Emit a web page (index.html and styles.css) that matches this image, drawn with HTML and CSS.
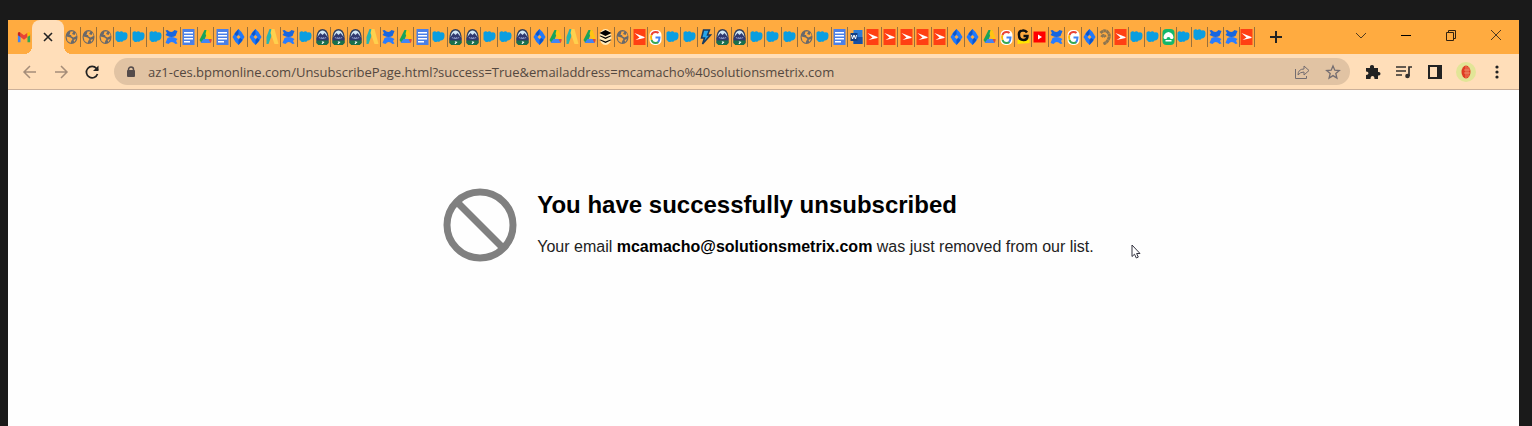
FILE: index.html
```html
<!DOCTYPE html>
<html lang="en">
<head>
    <meta charset="UTF-8">
    <meta name="viewport" content="width=device-width, initial-scale=1">
    <title>Unsubscribe</title>
    <link rel="stylesheet" href="styles.css">
</head>
<body>
    <!-- Favicon shapes used by the tabs -->
    <svg class="sprite" aria-hidden="true">
        <symbol id="gmail" viewBox="0 0 16 16">
            <path fill="#4285f4" d="M1 14V5l3 2v7z"/>
            <path fill="#34a853" d="M12 14V7l3-2v9z"/>
            <path fill="#ea4335" d="M4 8V3l4 3 4-3v5l-4 3z"/>
            <path fill="#c5221f" d="M1 3.500Q2 1.500 4 3v5L1 6z"/>
            <path fill="#fbbc04" d="M15 3.500Q14 1.500 12 3v5l3-2z"/>
        </symbol>
        <symbol id="globe" viewBox="0 0 12 16">
            <ellipse cx="6" cy="8" rx="6" ry="7" fill="#69696b"/>
            <path fill="#ffab40" d="M5 2.500h3L6.500 5 9 6l1.500-2.500L11 7 8 8.500 6 7.500 5.500 6H4z"/>
            <path fill="#ffab40" d="M1 7.500l4 1 2 1.500-1 1.500-1 2.500L2 12z"/>
            <path fill="#ffab40" d="M8 11l2.500-1L9 13z"/>
        </symbol>
        <symbol id="cloud" viewBox="0 0 12 16">
            <path fill="#0a9ee0" d="M0 3.500q2-2 4-.5 2-1.500 4 .5 4-1 4 3 0 5-4 5-1 2-3 1-3 1.500-4-1Q0 11.500 0 10z"/>
        </symbol>
        <symbol id="confluence" viewBox="0 0 12 16">
            <path fill="#1766e0" d="M0 1.500l2-.5q4 4 7 0l3 1-2 5q-4 2-8 0L0 6l1.500-2z"/>
            <path fill="#2a7dff" d="M12 14.500l-2 .5q-4-4-7 0l-3-1 2-5q4-2 8 0l2 1-1.500 2z"/>
        </symbol>
        <symbol id="docs" viewBox="0 0 12 16">
            <path fill="#4a80e8" d="M0 0h12v16H0z"/>
            <path fill="#fff" d="M1.500 3h9v1.500h-9zM1.500 6h9v1.500h-9zM1.500 9h9v1.500h-9zM1.500 12h6v1.500h-6z"/>
        </symbol>
        <symbol id="drive" viewBox="0 0 12 16">
            <path fill="#17a35a" d="M5 1h4L4 13l-2 1-2-3z"/>
            <path fill="#ffc412" d="M7 1h2l3 8v2H9L6 5z"/>
            <path fill="#4285f4" d="M4 10h8l-1 4H1z"/>
            <path fill="#e5483a" d="M9 10h3v2l-1 2z"/>
        </symbol>
        <symbol id="jira" viewBox="0 0 12 16">
            <path fill="#2079fa" d="M6 0l3 3 3 5-3 5-3 3-3-3-3-5 3-5z"/>
            <path fill="#0d55c9" d="M6 0L2 5l2 2 2-2zM6 16l4-5-2-2-2 2z"/>
            <path fill="#ffab40" d="M6 6l2 2-2 2-2-2z"/>
        </symbol>
        <symbol id="ribbon" viewBox="0 0 12 16">
            <path fill="#26b5b0" d="M3 0h2l1 4-4 11H0V8z"/>
            <path fill="#ffd04d" d="M5 0h3l4 15H8L4 4z"/>
        </symbol>
        <symbol id="mountain" viewBox="0 0 12 16">
            <path fill="#34405c" d="M0 7q1-7 6-7t6 7v7l-2 2H2l-2-2z"/>
            <path fill="#cfe6f5" d="M1 8Q2 1.500 6 1.500T11 8z"/>
            <path fill="#303a70" d="M0 11.500V9l4-5 2 2 2-2 4 5v2.500z"/>
            <path fill="#8d9bcb" d="M2 9l1-1 1 1 1-1 1 1 1-1 1 1 1-1 1 1-4 1z"/>
            <path fill="#19704b" d="M0 11.500h12V14l-2 2H2l-2-2z"/>
            <path fill="#fff" d="M5 12l3 1-2 2H5l1-2z"/>
        </symbol>
        <symbol id="buffer" viewBox="0 0 12 16">
            <ellipse cx="6" cy="8" rx="6" ry="8" fill="#ffeab9"/>
            <path d="M6 1l6 3-6 3-6-3zM0 7l1-.5 5 2 5-2 1 .5-6 3zM0 11l1-.5 5 2 5-2 1 .5-6 3z"/>
        </symbol>
        <symbol id="creatio" viewBox="0 0 12 16">
            <path fill="#ff4013" d="M0 0h12v16H0z"/>
            <path fill="#fff" d="M1 4l10 4v1L2 11l4-2.500z"/>
        </symbol>
        <symbol id="google" viewBox="0 0 12 16">
            <rect y="1" width="12" height="15" rx="5" fill="#fff"/>
            <path fill="none" stroke="#ea4335" stroke-width="2" d="M2 6q1-3 4-3 2 0 3 1"/>
            <path fill="none" stroke="#fbbc05" stroke-width="2" d="M2 6q-1 2 0 5"/>
            <path fill="none" stroke="#34a853" stroke-width="2" d="M2 11q1 3 4 3 2 0 3-1"/>
            <path fill="none" stroke="#4285f4" stroke-width="2" d="M6 8.500h4q0 3-1.500 4.500"/>
        </symbol>
        <symbol id="bolt" viewBox="0 0 12 16">
            <path fill="#27a5e8" stroke="#173b60" stroke-width="1.500" d="M4 1h6L8 6h3L3 15l2-6H2z"/>
        </symbol>
        <symbol id="word" viewBox="0 0 12 16">
            <path fill="#2d7dd6" d="M3 1h9v14H3z"/>
            <path fill="#164fa3" d="M3 8h9v7H3z"/>
            <path fill="#123f85" d="M0 4h7v8H0z"/>
            <path fill="none" stroke="#fff" d="M1 6l1 4 1.500-4L5 10l1-4"/>
        </symbol>
        <symbol id="g-mark" viewBox="0 0 12 16">
            <path fill="#ffe500" d="M0 11l12-1v4l-12 1z"/>
            <path fill="none" stroke="#111" stroke-width="2.500" d="M9.500 3.500Q8 1 5 1.500 1 2 1.500 6q0 5 4.500 5 4 0 4-4H6"/>
        </symbol>
        <symbol id="video" viewBox="0 0 12 16">
            <path fill="#f00" d="M0 2.500h12v11H0z"/>
            <path fill="#fff" d="M4.500 5.500l4 2.500-4 2.500z"/>
        </symbol>
        <symbol id="horseshoe" viewBox="0 0 12 16">
            <path fill="none" stroke="#8d754f" stroke-width="3" stroke-dasharray="3 .3" d="M1 4q4-4 7-1 3 3 1 7-1 3-5 5M2 8q2-3 4 0"/>
        </symbol>
        <symbol id="green" viewBox="0 0 12 16">
            <rect width="12" height="16" rx="4" fill="#13b76b"/>
            <path fill="#fff" d="M1 9q0-5 5-6 5 1 5 6l-1 1H8q0-2-2-2t-2 2H2zM3 11h6v1.500H3z"/>
        </symbol>
    </svg>

    <div class="browser">
        <div class="tab-strip">
            <button class="pinned-tab" aria-label="Gmail"><svg class="favicon-wide"><use href="#gmail"/></svg></button>
            <div class="active-tab">
                <button class="close-tab" aria-label="Close tab">
                    <svg width="10" height="10" viewBox="0 0 10 10"><path d="M1 1l8 8M9 1L1 9" stroke="#222" stroke-width="1.600"/></svg>
                </button>
            </div>
            <div class="tabs" id="tabs"></div>
            <button class="new-tab" aria-label="New tab">
                <svg width="12" height="12" viewBox="0 0 12 12"><path d="M6 0v12M0 6h12" stroke="#222" stroke-width="2"/></svg>
            </button>
            <div class="window-controls">
                <button aria-label="Search tabs"><svg viewBox="0 0 12 12"><path d="M1 4l5 5 5-5"/></svg></button>
                <button aria-label="Minimize"><svg viewBox="0 0 12 12"><path d="M1 6.500h10" stroke="#000"/></svg></button>
                <button aria-label="Restore"><svg viewBox="0 0 12 12"><path d="M1.500 3.500h7v8h-7zM3.500 3.500v-2h7v8h-2" stroke="#33220f"/></svg></button>
                <button aria-label="Close"><svg viewBox="0 0 12 12"><path d="M1 1l10 10M11 1L1 11"/></svg></button>
            </div>
        </div>

        <div class="toolbar">
            <div class="nav-buttons">
                <button aria-label="Back"><svg viewBox="0 0 16 16"><path d="M14 8H3M8 2L2 8l6 6" stroke="#a58d79"/></svg></button>
                <button aria-label="Forward"><svg viewBox="0 0 16 16"><path d="M2 8h11M8 2l6 6-6 6" stroke="#a58d79"/></svg></button>
                <button aria-label="Reload"><svg viewBox="0 0 16 16"><path d="M13.500 10A5.700 5.700 0 1 1 12.500 4.500L14 6" stroke="#222" stroke-width="1.700"/><path d="M14.500 1.500V7H9z" fill="#222" stroke="none"/></svg></button>
            </div>
            <div class="address-bar">
                <svg class="lock" viewBox="0 0 10 12"><path d="M2.500 5V3.500a2.500 2.500 0 0 1 5 0V5" fill="none" stroke="#544b4a" stroke-width="1.500"/><rect x="1" y="4" width="8" height="7" rx="1" fill="#544b4a"/></svg>
                <input class="url" type="text" aria-label="Address" value="az1-ces.bpmonline.com/UnsubscribePage.html?success=True&amp;emailaddress=mcamacho%40solutionsmetrix.com">
                <button aria-label="Share"><svg viewBox="0 0 16 16"><path d="M1.500 5v9.500h11V12M4 11q0-6 6-6V2l5 4.500L10 11V8Q6 8 4 11z"/></svg></button>
                <button aria-label="Bookmark"><svg viewBox="0 0 16 16"><path d="M8 2l1.800 4.200 4.500.3-3.500 3 1.100 4.500L8 11.600 4.100 14l1.100-4.500-3.500-3 4.500-.3z" stroke-width="1.300"/></svg></button>
            </div>
            <div class="extensions">
                <button aria-label="Extensions"><svg viewBox="0 0 16 16"><path fill="#222" d="M1 4h4q-.5-3 2-3t2 3h4v4q2.500-.5 2.500 1.800T13 11.500V15H9.500Q9.500 12 7.500 12T5.500 15H1v-4q2.500 0 2.500-1.800T1 7.500z"/></svg></button>
                <button aria-label="Media"><svg viewBox="0 0 16 16"><path d="M0 3h10M0 7h10M0 11h6M13 12V3h3" fill="none" stroke="#33302e" stroke-width="1.700"/><circle cx="11.500" cy="12" r="2.300" fill="#33302e"/></svg></button>
                <button aria-label="Side panel"><svg viewBox="0 0 16 16"><path d="M2 2h12v12H2z" fill="none" stroke="#222" stroke-width="2"/><path d="M10 2h4v12h-4z" fill="#222"/></svg></button>
                <button class="profile" aria-label="Profile"><svg viewBox="0 0 20 20"><circle cx="10" cy="10" r="10" fill="#e2e597"/><ellipse cx="10" cy="10" rx="4.500" ry="6.500" fill="#df3b22"/><path d="M10 4v12M12 5v10M8 8h6M8 11h6" stroke="#f3a27b" stroke-width=".7"/></svg></button>
                <button aria-label="Menu"><svg viewBox="0 0 16 16" fill="#222"><circle cx="8" cy="3" r="1.600"/><circle cx="8" cy="8" r="1.600"/><circle cx="8" cy="13" r="1.600"/></svg></button>
            </div>
        </div>

        <main class="page">
            <svg class="ban-icon" viewBox="0 0 74 74"><g fill="none" stroke="#808080" stroke-width="7"><circle cx="37" cy="37" r="33"/><path d="M14 14l46 46"/></g></svg>
            <div class="message">
                <h1>You have successfully unsubscribed</h1>
                <p>Your email <strong>mcamacho@solutionsmetrix.com</strong> was just removed from our list.</p>
            </div>
            <svg class="cursor" viewBox="0 0 10 16"><path d="M1 1v11.500l2.500-2.300L5.300 14l2-.9-1.700-3.600H9z" fill="#fff" stroke="#33333f"/></svg>
        </main>
    </div>

    <script src="script.js"></script>
</body>
</html>
```
FILE: styles.css
```css
body {
    margin: 0;
    background-color: #1a1a1a;
    font-family: "Liberation Sans", Arial, sans-serif;
}

button {
    display: flex;
    align-items: center;
    justify-content: center;
    padding: 0;
    border: none;
    background: none;
    cursor: pointer;
}

.sprite {
    display: none;
}

.browser {
    display: flex;
    flex-direction: column;
    box-sizing: border-box;
    min-height: 100vh;
    padding: 20px 13px 0 8px;
}

/* Tab strip */
.tab-strip {
    display: flex;
    height: 34px;
    background-color: #ffab40;
}

.pinned-tab {
    width: 24px;
    padding-left: 8px;
}

.favicon-wide {
    width: 14px;
    height: 16px;
}

.active-tab {
    position: relative;
    display: flex;
    justify-content: center;
    width: 32px;
    border-radius: 8px 8px 0 0;
    background-color: #ffdeb9;
}

.active-tab::before,
.active-tab::after {
    content: "";
    position: absolute;
    bottom: 0;
    width: 8px;
    height: 8px;
}

.active-tab::before {
    right: 100%;
    background: radial-gradient(circle at 0 0, transparent 8px, #ffdeb9 8px);
}

.active-tab::after {
    left: 100%;
    background: radial-gradient(circle at 100% 0, transparent 8px, #ffdeb9 8px);
}

.tabs {
    display: flex;
    flex: 0 1 1191px;
    align-items: center;
    min-width: 0;
}

.tab {
    flex: 17 1 0;
    height: 20px;
    min-width: 0;
    border-right: 1px solid #98703c;
}

.tab.narrow {
    flex-grow: 16;
}

.tab svg {
    width: 13px;
    height: 16px;
}

.tab.raised svg {
    margin-bottom: 5px;
}

.new-tab {
    width: 42px;
}

.window-controls {
    display: flex;
    margin-left: auto;
    padding-right: 1px;
}

.window-controls button {
    width: 45px;
    padding-bottom: 4px;
}

.window-controls svg {
    width: 12px;
    height: 12px;
    fill: none;
    stroke: #4f3a20;
}

/* Toolbar */
.toolbar {
    display: flex;
    align-items: center;
    height: 35px;
    border-bottom: 1px solid #cbb09a;
    background-color: #ffdeb9;
}

.nav-buttons {
    display: flex;
    padding: 0 7px 0 6px;
}

.nav-buttons button,
.address-bar button,
.extensions button {
    width: 31px;
    height: 27px;
}

.toolbar svg {
    width: 16px;
    height: 16px;
}

.nav-buttons svg {
    fill: none;
    stroke-width: 1.5;
}

.address-bar {
    display: flex;
    flex: 1;
    align-items: center;
    height: 27px;
    padding: 0 2px 0 12px;
    border-radius: 14px;
    background-color: #e1c3a3;
}

.toolbar .lock {
    width: 10px;
    height: 12px;
}

.url {
    flex: 1;
    min-width: 0;
    margin-left: 12px;
    padding: 0;
    border: none;
    outline: none;
    background: none;
    color: #54483f;
    font: 13px "Open Sans", sans-serif;
}

.address-bar button svg {
    fill: none;
    stroke: #746d70;
}

.extensions {
    display: flex;
    padding: 0 7px;
}

.extensions .profile svg {
    width: 20px;
    height: 20px;
}

/* Page */
.page {
    position: relative;
    display: flex;
    flex: 1;
    align-items: flex-start;
    justify-content: center;
    gap: 20px;
    padding: 98px 0 0 10px;
    background-color: #fefefe;
}

.ban-icon {
    width: 74px;
    height: 74px;
}

.message {
    color: #222;
}

.message h1 {
    margin: 0;
    color: #000;
    font-size: 24px;
    line-height: 34px;
}

.message p {
    margin: 15px 0 0;
    font-size: 16px;
    line-height: 20px;
}

.message strong {
    color: #000;
}

.cursor {
    position: absolute;
    top: 154px;
    left: 1123px;
    width: 10px;
    height: 16px;
}
```
FILE: script.js
```js
// [icon, how many tabs in a row]
const groups = [
    ['globe', 3], ['cloud', 3], ['confluence', 1], ['docs', 1], ['drive', 1], ['docs', 1],
    ['jira', 2], ['ribbon', 1], ['confluence', 1], ['cloud', 1], ['mountain', 3], ['ribbon', 1],
    ['confluence', 1], ['drive', 1], ['docs', 1], ['cloud', 1], ['mountain', 2], ['cloud', 2],
    ['mountain', 1], ['jira', 1], ['drive', 1], ['ribbon', 1], ['drive', 1], ['buffer', 1],
    ['globe', 1], ['creatio', 1], ['google', 1], ['cloud', 2], ['bolt', 1], ['mountain', 2],
    ['cloud', 3], ['globe', 1], ['cloud', 1], ['docs', 1], ['word', 1], ['creatio', 5],
    ['jira', 2], ['drive', 1], ['google', 1], ['g-mark', 1], ['video', 1], ['confluence', 1],
    ['google', 1], ['jira', 1], ['horseshoe', 1], ['creatio', 1], ['cloud', 2], ['green', 1],
    ['cloud', 2], ['confluence', 2], ['creatio', 1]
];
const firstNarrow = 61;
const raisedTab = 68;

const icons = groups.flatMap(([icon, count]) => Array(count).fill(icon));
document.getElementById('tabs').innerHTML = icons.map((icon, i) => `
    <button class="tab${i >= firstNarrow ? ' narrow' : ''}${i === raisedTab ? ' raised' : ''}" aria-label="${icon}">
        <svg><use href="#${icon}"/></svg>
    </button>
`).join('');
```
